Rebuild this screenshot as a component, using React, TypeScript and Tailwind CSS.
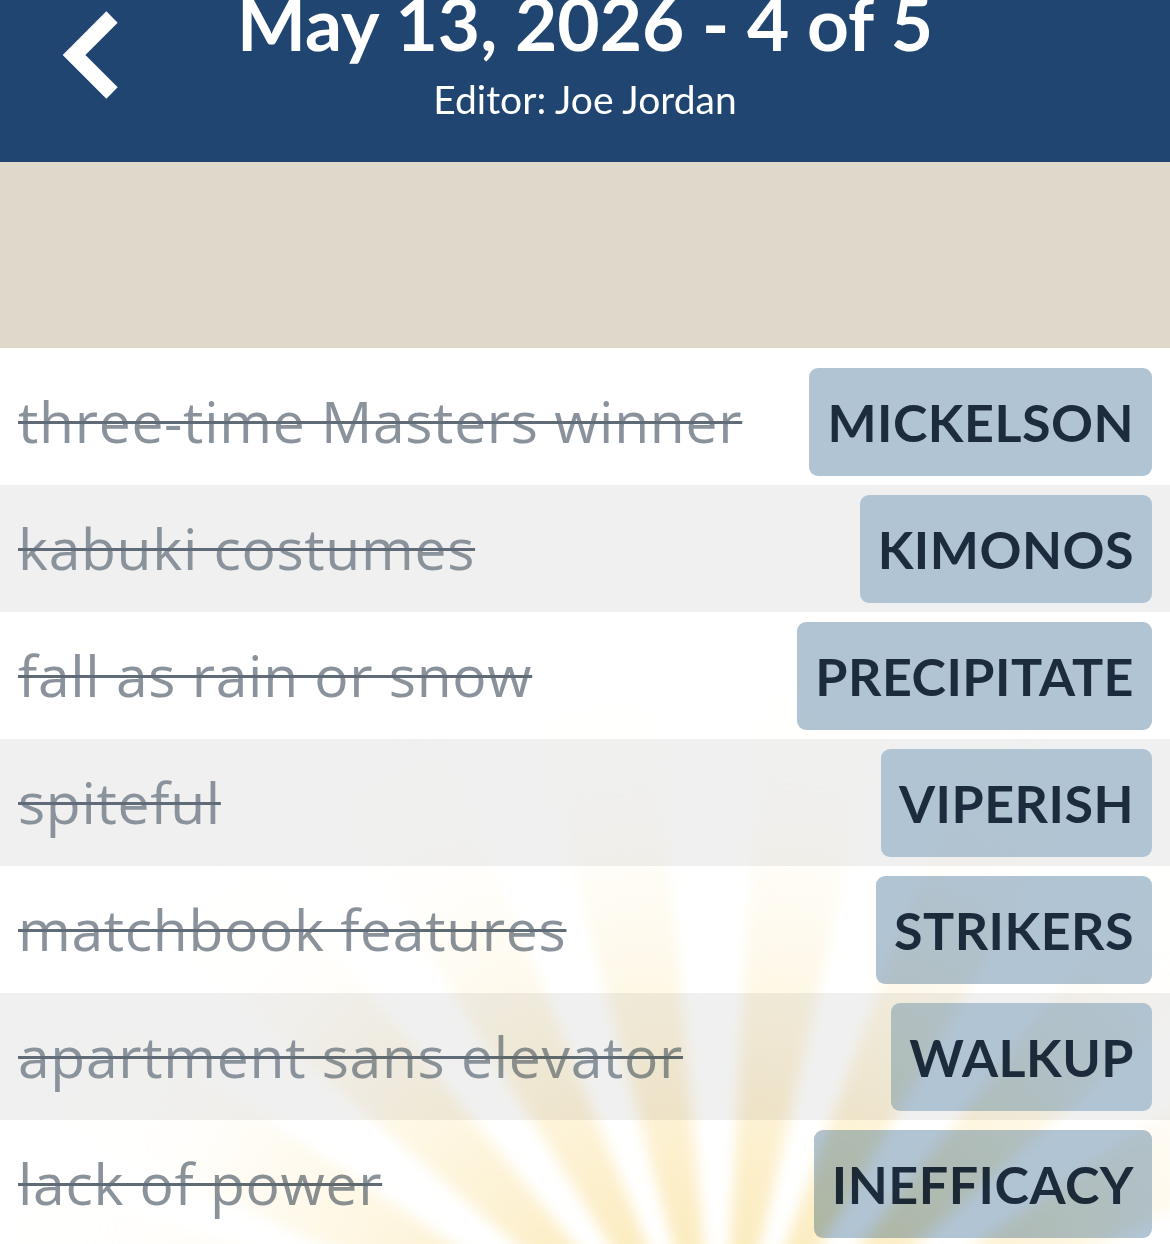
type Clue = { clue: string; answer: string }

const clues: Clue[] = [
  { clue: 'three-time Masters winner', answer: 'MICKELSON' },
  { clue: 'kabuki costumes', answer: 'KIMONOS' },
  { clue: 'fall as rain or snow', answer: 'PRECIPITATE' },
  { clue: 'spiteful', answer: 'VIPERISH' },
  { clue: 'matchbook features', answer: 'STRIKERS' },
  { clue: 'apartment sans elevator', answer: 'WALKUP' },
  { clue: 'lack of power', answer: 'INEFFICACY' },
]

// sunburst rays fanning up from below the last row
const RAYS = [-75, -61, -44, -27, -10, 8, 25, 43, 60]

function Sunburst() {
  const cx = 720
  const cy = 756
  const len = 1100
  const half = 4.8
  const pt = (deg: number) => {
    const r = (deg * Math.PI) / 180
    return `${cx + Math.sin(r) * len},${cy - Math.cos(r) * len}`
  }
  return (
    <svg
      className="pointer-events-none absolute bottom-0 left-0 mix-blend-multiply"
      width="1170"
      height="580"
      viewBox="0 0 1170 580"
    >
      <defs>
        <radialGradient id="ray" cx={cx} cy={cy} r="760" gradientUnits="userSpaceOnUse">
          <stop offset="0" stopColor="#f9df94" stopOpacity="0.8" />
          <stop offset="0.3" stopColor="#fae4a6" stopOpacity="0.65" />
          <stop offset="0.6" stopColor="#fcecbf" stopOpacity="0.35" />
          <stop offset="0.8" stopColor="#fdf3d3" stopOpacity="0.08" />
          <stop offset="1" stopColor="#fdf3d3" stopOpacity="0" />
        </radialGradient>
        <filter id="soft" x="-10%" y="-10%" width="120%" height="120%">
          <feGaussianBlur stdDeviation="7" />
        </filter>
      </defs>
      <g filter="url(#soft)">
        {RAYS.map((a) => (
          <polygon key={a} points={`${cx},${cy} ${pt(a - half)} ${pt(a + half)}`} fill="url(#ray)" />
        ))}
      </g>
    </svg>
  )
}

function Row({ item, shaded }: { item: Clue; shaded: boolean }) {
  return (
    <div className={`flex h-[127px] items-center justify-between pl-[18px] pr-[18px] ${shaded ? 'bg-[#f0f0f0]' : 'bg-white'}`}>
      <span className="font-['Open_Sans','Lato',sans-serif] text-[57px] leading-none tracking-[0.7px] text-[#8a939c] line-through decoration-[#5f6b77] decoration-[3px]">
        {item.clue}
      </span>
      <div className="flex h-[108px] items-center rounded-[9px] bg-[#b1c4d4] px-[18px]">
        <span className="text-[52px] font-bold leading-none tracking-[0.5px] text-[#1c2b3e]">{item.answer}</span>
      </div>
    </div>
  )
}

export default function App() {
  return (
    <div className="h-[1244px] overflow-hidden bg-white font-['Lato','Open_Sans',sans-serif]">
      <header className="relative flex h-[162px] flex-col items-center bg-[#1f4570] text-white">
        <svg className="absolute left-[52px] top-0" width="80" height="110" viewBox="0 0 80 110">
          <polyline points="60,17 22,55 60,93" fill="none" stroke="white" strokeWidth="16" strokeLinejoin="miter" />
        </svg>
        <h1 className="-mt-[13px] text-[73px] font-bold leading-none">May 13, 2026 - 4 of 5</h1>
        <p className="mt-[20px] text-[39px] leading-none">Editor: Joe Jordan</p>
      </header>
      <div className="h-[186px] bg-[#dfd9cc]" />
      <div className="relative bg-white pt-[10px]">
        {clues.map((c, i) => (
          <Row key={c.answer} item={c} shaded={i % 2 === 1} />
        ))}
        <Sunburst />
      </div>
    </div>
  )
}
